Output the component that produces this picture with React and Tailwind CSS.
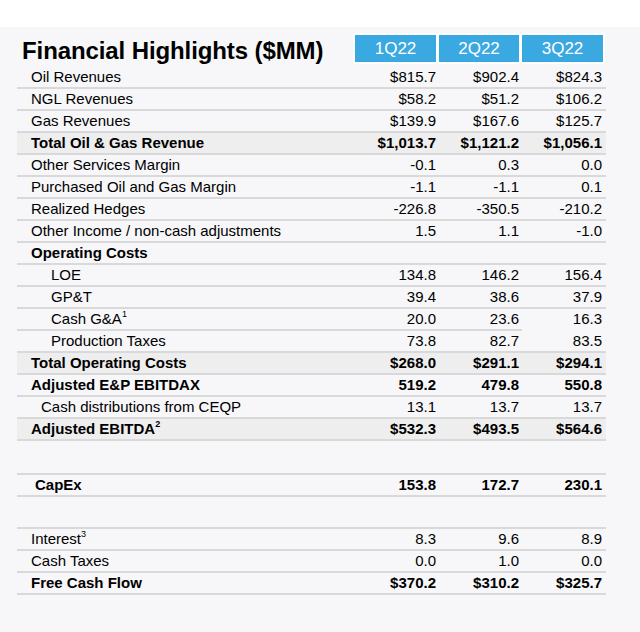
import React from "react";

const rows = [
  { label: "Oil Revenues", v: ["$815.7", "$902.4", "$824.3"] },
  { label: "NGL Revenues", v: ["$58.2", "$51.2", "$106.2"] },
  { label: "Gas Revenues", v: ["$139.9", "$167.6", "$125.7"] },
  { label: "Total Oil & Gas Revenue", v: ["$1,013.7", "$1,121.2", "$1,056.1"], bold: true, shade: true },
  { label: "Other Services Margin", v: ["-0.1", "0.3", "0.0"] },
  { label: "Purchased Oil and Gas Margin", v: ["-1.1", "-1.1", "0.1"] },
  { label: "Realized Hedges", v: ["-226.8", "-350.5", "-210.2"] },
  { label: "Other Income / non-cash adjustments", v: ["1.5", "1.1", "-1.0"] },
  { label: "Operating Costs", v: ["", "", ""], bold: true },
  { label: "LOE", v: ["134.8", "146.2", "156.4"], indent: "pl-[34px]" },
  { label: "GP&T", v: ["39.4", "38.6", "37.9"], indent: "pl-[34px]" },
  { label: "Cash G&A", sup: "1", v: ["20.0", "23.6", "16.3"], indent: "pl-[34px]", partial: true },
  { label: "Production Taxes", v: ["73.8", "82.7", "83.5"], indent: "pl-[34px]" },
  { label: "Total Operating Costs", v: ["$268.0", "$291.1", "$294.1"], bold: true, shade: true },
  { label: "Adjusted E&P EBITDAX", v: ["519.2", "479.8", "550.8"], bold: true },
  { label: "Cash distributions from CEQP", v: ["13.1", "13.7", "13.7"], indent: "pl-[24px]" },
  { label: "Adjusted EBITDA", sup: "2", v: ["$532.3", "$493.5", "$564.6"], bold: true, shade: true },
];

const capex = { label: "CapEx", v: ["153.8", "172.7", "230.1"], bold: true, indent: "pl-[18px]" };

const cash = [
  { label: "Interest", sup: "3", v: ["8.3", "9.6", "8.9"] },
  { label: "Cash Taxes", v: ["0.0", "1.0", "0.0"] },
  { label: "Free Cash Flow", v: ["$370.2", "$310.2", "$325.7"], bold: true },
];

function Row({ row }) {
  return (
    <div className={row.shade ? "bg-[#eeeeee]" : ""}>
      <div className={`flex h-[20px] items-center pr-[4px] ${row.bold ? "font-bold" : ""}`}>
        <div className={`flex-1 ${row.indent || "pl-[14px]"}`}>
          {row.label}
          {row.sup && <span className="relative -top-[7px] text-[9px] leading-none">{row.sup}</span>}
        </div>
        {row.v.map((val, i) => (
          <div key={i} className="w-[83px] text-right">
            {val}
          </div>
        ))}
      </div>
      <div className={`h-[2px] bg-[#d9d9d9] ${row.partial ? "w-[505px]" : "w-full"}`} />
    </div>
  );
}

function App() {
  return (
    <div className="w-[640px] h-[632px] bg-white font-['Liberation_Sans',Arial,sans-serif] text-[15px] leading-[20px] text-black">
      <div className="h-[27px]" />
      <div className="h-[605px] bg-[#f7f7f9] pl-[17px]">
        <div className="w-[589px]">
          <div className="flex h-[40px]">
            <div className="w-[336px] self-end mb-[2px] pl-[5px] text-[24px] leading-[28px] font-bold tracking-[-0.1px]">
              Financial Highlights ($MM)
            </div>
            <div className="self-end mb-[3px] flex gap-[3px] bg-white p-[2px] text-[17px] text-white">
              <div className="flex h-[27px] w-[81px] items-center justify-center bg-[#3aa9e1]">1Q22</div>
              <div className="flex h-[27px] w-[80px] items-center justify-center bg-[#3aa9e1]">2Q22</div>
              <div className="flex h-[27px] w-[81px] items-center justify-center bg-[#3aa9e1]">3Q22</div>
            </div>
          </div>

          {rows.map((r) => (
            <Row key={r.label} row={r} />
          ))}

          <div className="mt-[32px] h-[2px] bg-[#d9d9d9]" />
          <Row row={capex} />

          <div className="mt-[30px] h-[2px] bg-[#d9d9d9]" />
          {cash.map((r) => (
            <Row key={r.label} row={r} />
          ))}
        </div>
      </div>
    </div>
  );
}

export default App;
